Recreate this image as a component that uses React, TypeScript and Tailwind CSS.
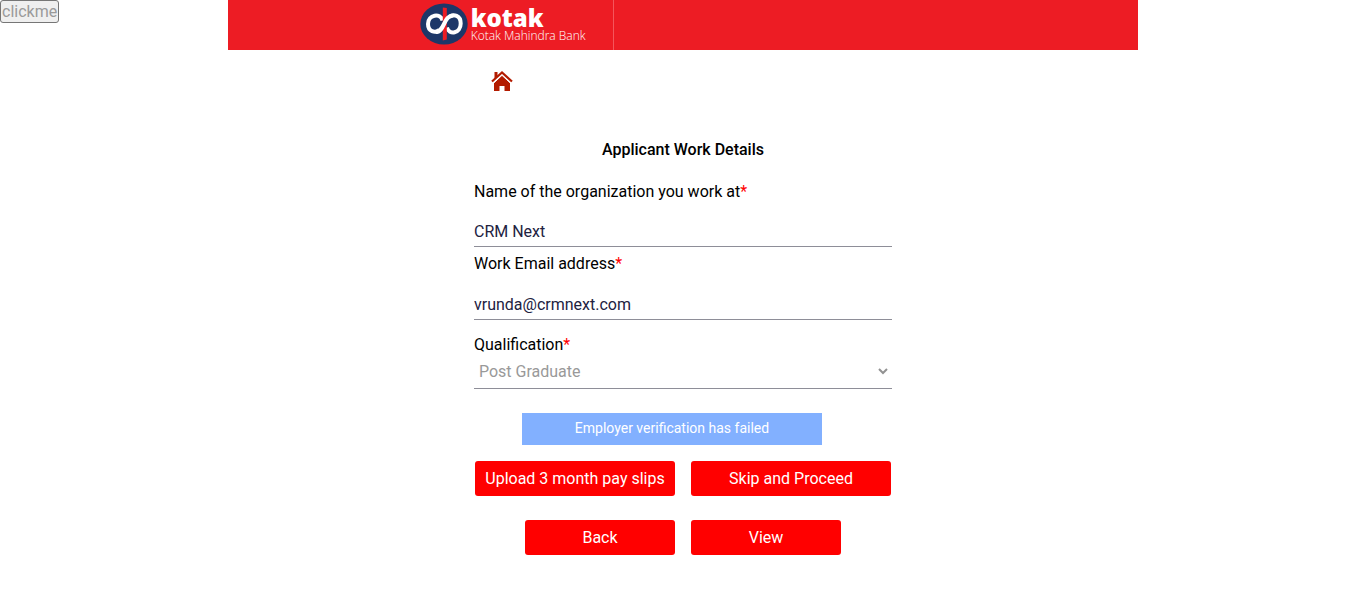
import { useState } from 'react';
import type { ReactNode } from 'react';

function KotakMark() {
  return (
    <svg viewBox="0 0 48 42" className="h-[42px] w-12 shrink-0" aria-hidden="true">
      <ellipse cx="24" cy="21" rx="23.7" ry="20.5" fill="#1d3768" />
      <g fill="none" stroke="#fff" strokeWidth="4">
        <path d="M22.500 17.500C20.500 9.500 8 11.500 8 21C8 28.500 15 30.500 19 27" />
        <path d="M27 24.500C29 32.500 40.700 30.500 40.700 20.500C40.700 12.500 33.500 10.500 29.500 14" />
      </g>
      <path d="M22.800 4.500L26.800 5v31.500l-4 1z" fill="#ed1c24" />
      <path
        d="M15.500 29C25 29 23 12.500 33.500 12.500"
        fill="none"
        stroke="#fff"
        strokeWidth="4.200"
      />
    </svg>
  );
}

function HomeIcon() {
  return (
    <svg viewBox="0 0 22 21" className="h-[21px] w-[22px]" aria-hidden="true">
      <path d="M3.500 1h3v4l-3 3z" fill="#b31b00" />
      <path d="M11 4.500L19 12v8h-5.500v-5h-5v5H3V12z" fill="#b31b00" />
      <path d="M1 10.500L11 1.500l10 9" fill="none" stroke="#b31b00" strokeWidth="2.200" />
      <path d="M2.500 12.200L11 4.300l8.500 7.900" fill="none" stroke="#fff" strokeWidth="0.900" />
    </svg>
  );
}

function Label({ htmlFor, children }: { htmlFor: string; children: ReactNode }) {
  return (
    <label htmlFor={htmlFor} className="block leading-6 text-black">
      {children}
      <span className="text-[#ff0000]">*</span>
    </label>
  );
}

function ActionButton({ children, wide = false }: { children: ReactNode; wide?: boolean }) {
  return (
    <button
      type="button"
      className={
        wide
          ? 'h-[35px] w-[200px] rounded-[3px] bg-[#ff0000] text-white'
          : 'h-[35px] w-[150px] rounded-[3px] bg-[#ff0000] text-white'
      }
    >
      {children}
    </button>
  );
}

export default function App() {
  const [organization, setOrganization] = useState('CRM Next');
  const [email, setEmail] = useState('vrunda@crmnext.com');

  return (
    <div className="grid grid-cols-[1fr_4fr_1fr] bg-white font-[Roboto,sans-serif] text-base text-black">
      <div>
        <button
          type="button"
          disabled
          className="block h-[23px] rounded-[3px] border border-[#767676] bg-[#efefef] px-px leading-5 text-[#9a9a9a]"
        >
          clickme
        </button>
      </div>

      <div className="min-w-0">
        <header className="flex h-[50px] bg-[#ed1c24] pl-48">
          <div className="flex items-center gap-[3px] border-r border-[#f4565c] pr-[27px] pb-[2px]">
            <KotakMark />
            <div className="pt-1 font-['Open_Sans',sans-serif] text-white">
              <div className="text-2xl leading-5 font-extrabold">kotak</div>
              <div className="text-xs leading-4 font-light">Kotak Mahindra Bank</div>
            </div>
          </div>
        </header>

        <main className="mx-auto max-w-[418px]">
          <nav className="flex pt-[21px] pl-[17px]">
            <a href="#home" aria-label="Home">
              <HomeIcon />
            </a>
          </nav>

          <h1 className="mt-[46px] text-center leading-6 font-medium">Applicant Work Details</h1>

          <form onSubmit={(event) => event.preventDefault()}>
            <div className="mt-[18px]">
              <Label htmlFor="organization">Name of the organization you work at</Label>
              <input
                id="organization"
                type="text"
                value={organization}
                onChange={(event) => setOrganization(event.target.value)}
                className="mt-3 h-[31px] w-full border-b border-[#8e8e98] leading-6 text-[#22223f] outline-none"
              />
            </div>

            <div className="mt-[5px]">
              <Label htmlFor="email">Work Email address</Label>
              <input
                id="email"
                type="email"
                value={email}
                onChange={(event) => setEmail(event.target.value)}
                className="mt-[14px] h-[30px] w-full border-b border-[#8e8e98] leading-6 text-[#22223f] outline-none"
              />
            </div>

            <div className="mt-[13px]">
              <Label htmlFor="qualification">Qualification</Label>
              <div className="grid items-center border-b border-[#8e8e98]">
                <select
                  id="qualification"
                  disabled
                  className="col-start-1 row-start-1 h-[31px] w-full appearance-none bg-transparent px-[5px] pb-[2px] text-[#999999]"
                >
                  <option>Post Graduate</option>
                </select>
                <svg
                  viewBox="0 0 10 7"
                  className="pointer-events-none col-start-1 row-start-1 mr-1 mb-[3px] h-[7px] w-[10px] justify-self-end"
                  aria-hidden="true"
                >
                  <path d="M1 1l4 4 4-4" fill="none" stroke="#929292" strokeWidth="2" />
                </svg>
              </div>
            </div>

            <div
              role="status"
              className="mt-6 mr-[70px] ml-12 h-8 bg-[#82b0ff] text-center text-sm leading-[30px] text-white"
            >
              Employer verification has failed
            </div>

            <div className="mt-4 flex justify-center gap-4">
              <ActionButton wide>Upload 3 month pay slips</ActionButton>
              <ActionButton wide>Skip and Proceed</ActionButton>
            </div>
            <div className="mt-6 flex justify-center gap-4">
              <ActionButton>Back</ActionButton>
              <ActionButton>View</ActionButton>
            </div>
          </form>
        </main>
      </div>
    </div>
  );
}
